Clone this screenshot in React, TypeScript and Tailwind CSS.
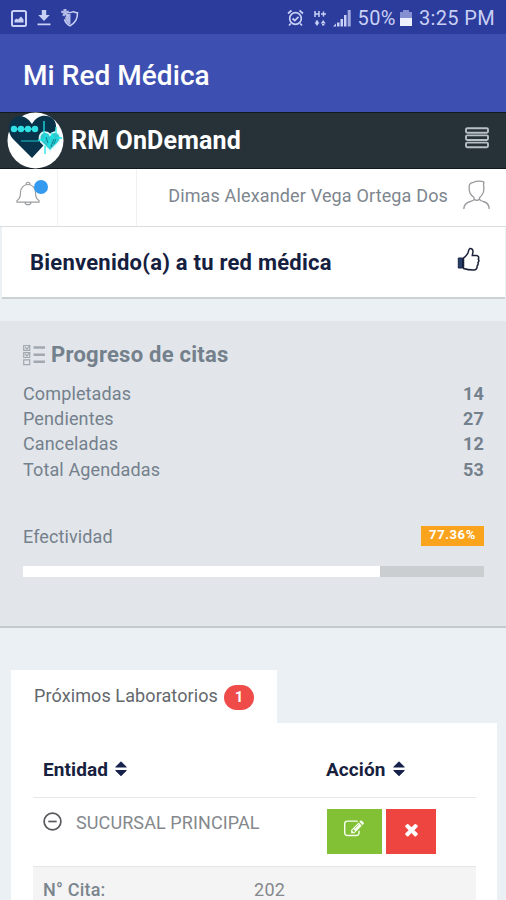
import type { ReactNode } from "react";

const STATS = [
  { label: "Completadas", value: 14 },
  { label: "Pendientes", value: 27 },
  { label: "Canceladas", value: 12 },
  { label: "Total Agendadas", value: 53 },
];

const EFFECTIVENESS = 77.36;

function StatusBar() {
  return (
    <div className="flex h-[34px] shrink-0 items-center bg-[#2c3c9c] pl-[11px] pr-[11px] pt-[2px] text-[#c9d0f5]">
      <svg width="16" height="17" viewBox="0 0 16 17" fill="none">
        <rect x="1" y="1" width="14" height="15" rx="1.5" stroke="currentColor" strokeWidth="2" />
        <path d="M3.5 12.5V10l2-1.500 1.500 1 3-3 2.500 3v3z" fill="currentColor" />
      </svg>
      <svg className="ml-[10px]" width="14" height="16" viewBox="0 0 14 16" fill="currentColor">
        <path d="M4.800 0h4.400v5h3.600L7 11 1.200 5h3.600zM0.500 13.500h13v1.800h-13z" />
      </svg>
      <svg className="ml-[9px]" width="19" height="18" viewBox="0 0 19 18" fill="none">
        <path
          d="M8.500 3.800c2.500-.2 4-.7 5-1.200 1.200.7 2.500 1.100 4 1.200.2 6-2 10-7.500 13-3-1.500-4.800-3.800-5.500-6.500"
          stroke="currentColor"
          strokeWidth="1.500"
        />
        <path d="M10.500 5v11C7.500 14.500 5.600 12 5 8.500L8 5z" fill="currentColor" opacity=".85" />
        <path
          d="M3.500 0h3v2l2-.6.8 2.200-1.900.8 1.300 1.800-2 1.400L5.500 6 4.200 7.600l-2-1.400 1.300-1.800-2.600-.8.700-2.200L3.500 2z"
          fill="currentColor"
          opacity=".85"
        />
      </svg>
      <div className="ml-auto flex items-center">
        <svg width="17" height="18" viewBox="0 0 17 18" fill="none" stroke="currentColor" strokeWidth="1.700">
          <circle cx="8.500" cy="9.500" r="5.800" />
          <path d="M1 4.500L4.500 1.500M16 4.500L12.500 1.500M3.800 14.500L2 16.500M13.200 14.500L15 16.500M5.500 9.500l2.300 2L11.500 7.800" />
        </svg>
        <svg className="ml-[9px]" width="14" height="17" viewBox="0 0 14 17" fill="none">
          <path d="M2 1v6M6 1v6M2 4h4M8 4h5M10.500 1.500v5" stroke="currentColor" strokeWidth="1.500" />
          <path d="M1.500 12.500h5L4 16zM2.800 10.500h2.400v2H2.800zM7.700 13.500h5L10.200 10zM9 13h2.400v2.500H9z" fill="currentColor" />
        </svg>
        <svg className="ml-[6px]" width="18" height="18" viewBox="0 0 18 18" fill="currentColor">
          <path d="M0 17.500h3v-3zM4 13.500h2.500v4H4zM7.500 10h2.500v7.500H7.500zM11 6h2.500v11.500H11z" />
          <path d="M14.700 1h3v16.500h-3z" opacity=".75" />
        </svg>
        <span className="ml-[7px] text-[20px] leading-none tracking-[0.4px]">50%</span>
        <svg className="ml-[4px]" width="12" height="18" viewBox="0 0 12 18">
          <path d="M3 1h6v2h3v6H0V3h3z" fill="#8590d3" />
          <path d="M0 9h12v8H0z" fill="#eef0fd" />
        </svg>
        <span className="ml-[7px] text-[20px] leading-none tracking-[0.35px]">3:25 PM</span>
      </div>
    </div>
  );
}

function Logo() {
  return (
    <svg width="57" height="57" viewBox="0 0 57 57" className="shrink-0">
      <circle cx="28.500" cy="28.500" r="28" fill="#fdfefe" />
      <path
        d="M25 46L6 27C1 21 0 13 5 8 11 2 19 3 25 12 30 3 39 2 45 6c5 4 5 10 2 16z"
        fill="#08334a"
      />
      <circle cx="7" cy="17" r="3.200" fill="#2fe0e4" />
      <circle cx="14" cy="17" r="3.200" fill="#2fe0e4" />
      <circle cx="21" cy="17" r="3.200" fill="#2fe0e4" />
      <circle cx="28" cy="17" r="3.200" fill="#2fe0e4" />
      <path d="M5 17h25" stroke="#2fe0e4" strokeWidth="1.500" />
      <path d="M14 29h18" stroke="#178f9d" strokeWidth="1.600" />
      <path
        d="M43 39l-9-9c-3-4-1-9 3-10 3 0 5 1 6 3 2-3 6-4 9-1 2 3 2 6-1 9z"
        fill="#31c9cf"
        stroke="#dffafa"
        strokeWidth="1.700"
      />
      <path
        d="M31 28h6l2-5 3 11 3-12 3 9 2-5h5M37 9v13M38 34v8M49 15v7"
        fill="none"
        stroke="#17e6e6"
        strokeWidth="1.300"
      />
      <path d="M39 25l2 6M44 35l3-8M47 32l2-5" fill="none" stroke="#0b7f8e" strokeWidth="1" />
    </svg>
  );
}

function BrandBar() {
  return (
    <div className="flex h-[57px] shrink-0 items-center border-y border-[#11191e] bg-[#263138] pl-[7px] pr-[17px]">
      <Logo />
      <span className="ml-[7px] text-[25px] font-bold leading-none tracking-[0.15px] text-white">RM OnDemand</span>
      <svg className="mb-[5px] ml-auto" width="24" height="22" viewBox="0 0 24 22" fill="none" stroke="#b9bfc6" strokeWidth="1.900">
        <rect x="1" y="1.200" width="22" height="4.600" rx="1.200" />
        <rect x="1" y="8.400" width="22" height="4.600" rx="1.200" />
        <rect x="1" y="15.600" width="22" height="4.600" rx="1.200" />
      </svg>
    </div>
  );
}

function UserBar() {
  return (
    <div className="flex h-[58px] shrink-0 border-b border-[#dadcdf] bg-white">
      <div className="relative w-[58px] border-r border-[#f0f1f2] pl-[16px] pt-[12px]">
        <svg width="24" height="25" viewBox="0 0 24 25" fill="none" stroke="#9b9da0" strokeWidth="1.200">
          <path d="M1 19.500c3-1.500 3.500-4 3.500-8C4.500 7 7.500 3.500 12 3.500s7.500 3.500 7.500 8c0 4 .5 6.500 3.500 8v1.700H1zM10 3.500c0-3 4-3 4 0M9 21.200c0 3.300 6 3.300 6 0" />
        </svg>
        <span className="absolute left-[34px] top-[11px] size-[14px] rounded-full bg-[#349af0]" />
      </div>
      <div className="w-[79px] border-r border-[#f0f1f2]" />
      <div className="flex flex-1 items-center justify-end pb-[5px] pr-[16px]">
        <span className="text-[18px] tracking-[0.15px] text-[#7e868e]">Dimas Alexander Vega Ortega Dos</span>
        <svg className="ml-[15px]" width="27" height="30" viewBox="0 0 27 30" fill="none" stroke="#989a9d" strokeWidth="1.300">
          <path d="M.8 29c0-5 2.500-6.500 6.500-7.500 3-.8 4.500-1.500 3.700-4C7.500 15 6 12 6.200 8.500 5.800 5 7 3 9.500 2.700c3-1.700 8.500-2.200 11.500-.7l-.5 2.500c1.200 5-.3 10-3.800 13-.8 2.500.8 3.200 3.500 4 4 1 6 2.700 6 7.500M11 19c1.500 1.800 4 1.800 5.500 0" />
        </svg>
      </div>
    </div>
  );
}

function Welcome() {
  return (
    <div className="ml-[2px] mr-px flex h-[72px] shrink-0 items-center border-b-2 border-[#cbd0d3] bg-white pl-[28px] pr-[25px]">
      <h2 className="text-[22px] font-bold tracking-[0.23px] text-[#15203f]">Bienvenido(a) a tu red médica</h2>
      <svg className="mb-[5px] ml-auto" width="23" height="25" viewBox="0 0 23 25" fill="none">
        <path d="M1.300 11h4.200v10H1.300z" fill="#263e6a" stroke="#172343" />
        <path
          d="M6.500 11c2-1 3.500-3.500 4.500-5 .5-1.500.5-4 2-4.500 1.500-.3 3 1 3 3 0 1.500-.7 3-.7 4h4c2 0 3 2 2 3.500.7 1 .5 2.700-.3 3.500.4 1.200 0 2.500-.8 3.200 0 2.300-1.200 4.300-3.500 4.300-3.500 0-6.500-.2-10.200-1.500z"
          stroke="#1a2139"
          strokeWidth="1.500"
        />
      </svg>
    </div>
  );
}

function ProgressCard() {
  return (
    <section className="mt-[22px] h-[307px] shrink-0 border-b-2 border-[#c4c9cd] bg-[#e2e6ea] pl-[23px] pr-[22px] pt-[19px] text-[#74808c]">
      <div className="flex h-[29px] items-center">
        <svg width="22" height="22" viewBox="0 0 22 22" fill="none" stroke="#a1a8b0">
          <path d="M.7 1.500h6v4.800h-6zM.7 8.700h6v4.800h-6zM.7 15.800h6v4.800h-6z" strokeWidth="1.200" />
          <path d="M2 3l2 2 3-4M2 10l2 2 3-4" strokeWidth="1.200" />
          <path d="M10.500 3.500H22M10.500 10.700H22M10.500 17.800H22" strokeWidth="2.600" />
        </svg>
        <h3 className="ml-[6px] text-[22px] font-bold tracking-[0.25px]">Progreso de citas</h3>
      </div>
      <dl className="mt-[12px] text-[18px] leading-[25.2px]">
        {STATS.map((s) => (
          <div key={s.label} className="flex justify-between">
            <dt className="tracking-[0.13px]">{s.label}</dt>
            <dd className="font-bold tracking-[0.2px]">{s.value}</dd>
          </div>
        ))}
      </dl>
      <div className="mt-[43px] flex items-center justify-between">
        <span className="text-[18px] leading-[24px] tracking-[0.1px]">Efectividad</span>
        <span className="mb-px h-[20px] w-[63px] bg-[#faa41e] text-center text-[13px] font-bold leading-[17px] tracking-[0.6px] text-white">
          {EFFECTIVENESS}%
        </span>
      </div>
      <div className="mt-[17px] h-[11px] bg-[#cbced1]">
        <div className="h-full bg-white" style={{ width: `${EFFECTIVENESS}%` }} />
      </div>
    </section>
  );
}

function SortHeader({ children }: { children: ReactNode }) {
  return (
    <div className="flex items-center">
      <span className="text-[19px] font-bold tracking-[0.1px] text-[#17213e]">{children}</span>
      <svg className="mb-[3px] ml-[7px]" width="12" height="16" viewBox="0 0 12 16" fill="#17224c">
        <path d="M6 0.800l5.300 5.200H.7zM.7 9.500h10.600L6 14.700z" stroke="#17224c" strokeLinejoin="round" />
      </svg>
    </div>
  );
}

function Laboratories() {
  return (
    <section className="ml-[11px] mr-[9px] mt-[42px]">
      <div className="flex h-[53px] w-[266px] bg-white pl-[23px]">
        <span className="mt-[12px] text-[18px] leading-[28px] tracking-[0.1px] text-[#64686c]">Próximos Laboratorios</span>
        <span className="ml-[6px] mt-[15px] h-[25px] w-[30px] rounded-full bg-[#ee4b49] text-center text-[15px] font-bold leading-[24px] text-white">
          1
        </span>
      </div>
      <div className="h-[190px] bg-white pl-[22px] pr-[21px] pt-[20px]">
        <div className="flex h-[55px] items-center border-b border-[#e7e8e9] pl-[10px]">
          <div className="w-[283px]">
            <SortHeader>Entidad</SortHeader>
          </div>
          <SortHeader>Acción</SortHeader>
        </div>
        <div className="flex h-[68px] pl-[10px]">
          <div className="flex h-[48px] w-[284px] items-center">
            <svg className="mb-[2px]" width="19" height="19" viewBox="0 0 19 19" fill="none" stroke="#57595d" strokeWidth="1.700">
              <circle cx="9.500" cy="9.500" r="8.400" />
              <path d="M5.300 9.500h8.400" />
            </svg>
            <span className="ml-[14px] text-[18px] tracking-[0.1px] text-[#85888c]">SUCURSAL PRINCIPAL</span>
          </div>
          <button type="button" className="mt-[11px] flex h-[45px] w-[55px] justify-center bg-[#82c136] pr-[2px] pt-[10px]">
            <svg width="20" height="20" viewBox="0 0 1792 1792" fill="#f6fff0">
              <path d="M888 1184l116-116-152-152-116 116v56h96v96h56zm440-720q-16-16-33 1l-350 350q-17 17-1 33t33-1l350-350q17-17 1-33zm80 594v190q0 119-84.500 203.500t-203.500 84.500h-832q-119 0-203.500-84.500t-84.500-203.500v-832q0-119 84.500-203.500t203.500-84.500h832q63 0 117 25 15 7 18 23 3 17-9 29l-49 49q-14 14-32 8-23-6-45-6h-832q-66 0-113 47t-47 113v832q0 66 47 113t113 47h832q66 0 113-47t47-113v-126q0-13 9-22l64-64q15-15 35-7t20 29zm-96-738l288 288-672 672h-288v-288zm444 132l-92 92-288-288 92-92q28-28 68-28t68 28l152 152q28 28 28 68t-28 68z" />
            </svg>
          </button>
          <button type="button" className="ml-[4px] mt-[11px] flex h-[45px] w-[50px] justify-center bg-[#ef4541] pt-[11px]">
            <svg width="19" height="19" viewBox="0 0 1792 1792" fill="#fff">
              <path d="M1490 1322q0 40-28 68l-136 136q-28 28-68 28t-68-28l-294-294-294 294q-28 28-68 28t-68-28l-136-136q-28-28-28-68t28-68l294-294-294-294q-28-28-28-68t28-68l136-136q28-28 68-28t68 28l294 294 294-294q28-28 68-28t68 28l136 136q28 28 28 68t-28 68l-294 294 294 294q28 28 28 68z" />
            </svg>
          </button>
        </div>
        <div className="flex h-[47px] border-t border-[#e4e5e6] bg-[#f4f4f4] pl-[10px] pt-[10px] text-[18px] leading-[26px] text-[#85888c]">
          <span className="w-[211px] font-medium tracking-[0.2px] text-[#7b858d]">N° Cita:</span>
          <span className="tracking-[0.3px]">202</span>
        </div>
      </div>
    </section>
  );
}

export default function App() {
  return (
    <div className="flex h-[900px] w-[506px] flex-col overflow-hidden bg-[#eaf0f3] font-[Roboto,sans-serif]">
      <StatusBar />
      <header className="flex h-[78px] shrink-0 items-center bg-[#3d50b2] pl-[23px] pt-[5px]">
        <h1 className="text-[28px] font-medium tracking-[0.05px] text-white">Mi Red Médica</h1>
      </header>
      <BrandBar />
      <UserBar />
      <Welcome />
      <ProgressCard />
      <Laboratories />
    </div>
  );
}
